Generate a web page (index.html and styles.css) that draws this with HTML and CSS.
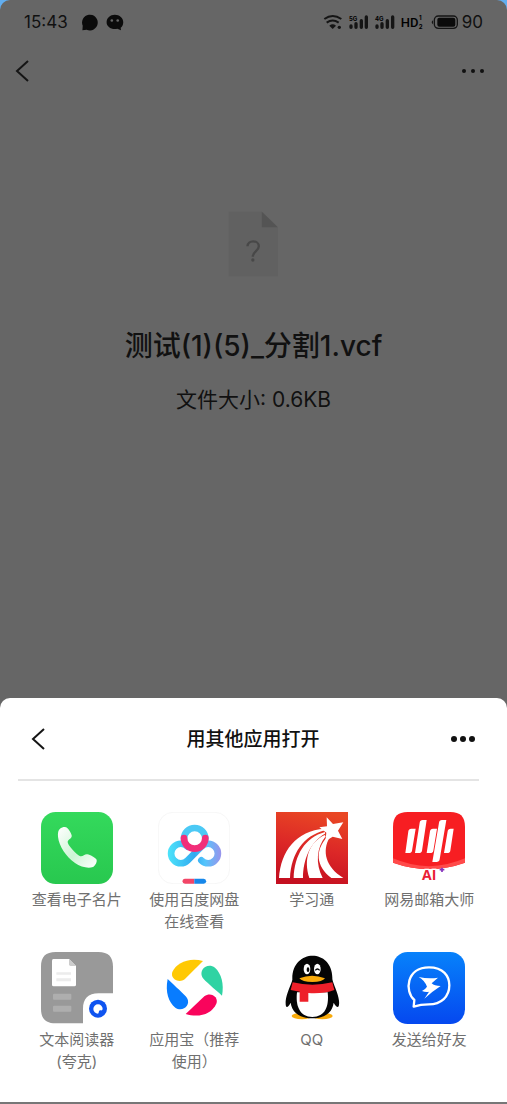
FILE: index.html
```html
<!DOCTYPE html>
<html lang="zh-CN">
<head>
<meta charset="utf-8">
<meta name="viewport" content="width=device-width, initial-scale=1">
<title>用其他应用打开</title>
<link rel="stylesheet" href="styles.css">
</head>
<body>
<div class="screen">
  <header class="status">
    <div class="status-left">
      <time class="clock">15:43</time>
      <svg class="status-chat" viewBox="244 40 132 52" aria-hidden="true">
        <path d="M247 90l1-14a24 24 0 1 1 12 12z" fill="#0b0b0b"/>
        <path d="M346 42c15 0 26 10 26 23 0 8-4 14-8 17l1 8-11-5c-18 4-33-6-33-20 0-13 11-23 25-23z" fill="#0b0b0b"/>
        <circle cx="337" cy="60" r="4" fill="#666"/><circle cx="355" cy="60" r="4" fill="#666"/>
      </svg>
    </div>
    <div class="status-right">
      <svg class="status-signal" viewBox="70 34 408 60" aria-hidden="true">
        <g fill="none" stroke="#151515" stroke-width="6">
          <path d="M74 55q25-18 51 0"/><path d="M81 66q18-13 36 0"/>
        </g>
        <path d="M89 75q10-8 20 0l-10 10z" fill="#151515"/><circle cx="119" cy="80" r="5" fill="#151515"/>
        <g stroke="#151515" stroke-width="10" stroke-linecap="round">
          <path d="M154 76v4M169 69v11M185 60v20M200 49v31M232 76v4M247 69v11M263 60v20M279 49v31"/>
        </g>
        <g class="tiny"><text x="148" y="60">5G</text><text x="226" y="60">4G</text></g>
        <text class="hd" x="303" y="80">HD</text>
        <g class="tiny"><text x="358" y="59">1</text><text x="357" y="84">2</text></g>
        <rect x="404" y="46" width="69" height="37" rx="12" fill="none" stroke="#151515" stroke-width="4"/>
        <rect x="413" y="51" width="54" height="27" rx="6" fill="#0b0b0b"/>
        <path d="M400 59q-8 6 0 12z" fill="#151515"/>
      </svg>
      <span class="level">90</span>
    </div>
  </header>
  <nav class="topbar">
    <button class="icon-btn" aria-label="返回"><svg class="chevron" viewBox="0 0 14 24"><path d="M13 2 2 12l11 10"/></svg></button>
    <button class="icon-btn" aria-label="更多"><svg class="dots" viewBox="0 0 24 6"><circle cx="3" cy="3" r="2"/><circle cx="12" cy="3" r="2"/><circle cx="21" cy="3" r="2"/></svg></button>
  </nav>
  <main class="file">
    <svg class="file-icon" viewBox="356 64 152 198" aria-hidden="true">
      <path d="M358 66h99l48 47v147H358z" fill="#616161"/>
      <path d="M457 66l48 47h-48z" fill="#545454"/>
      <path d="M414 170c0-20 34-20 34 0 0 14-18 15-18 31" fill="none" stroke="#484848" stroke-width="7"/>
      <circle cx="430" cy="211" r="5" fill="#484848"/>
    </svg>
    <h1 class="file-name">测试(1)(5)_分割1.vcf</h1>
    <p class="file-size">文件大小: 0.6KB</p>
  </main>
  <section class="sheet" aria-labelledby="sheet-title">
    <div class="sheet-head">
      <button class="icon-btn" aria-label="返回"><svg class="chevron" viewBox="0 0 14 24"><path d="M13 2 2 12l11 10"/></svg></button>
      <h2 class="sheet-title" id="sheet-title">用其他应用打开</h2>
      <button class="icon-btn" aria-label="更多"><svg class="dots" viewBox="0 0 24 6"><circle cx="3" cy="3" r="3"/><circle cx="12" cy="3" r="3"/><circle cx="21" cy="3" r="3"/></svg></button>
    </div>
    <hr class="divider">
    <div class="apps">
      <button class="app">
        <svg class="app-icon" viewBox="63 36 216 216" aria-hidden="true">
          <defs>
            <linearGradient id="green" x1="0" y1="0" x2="0" y2="1"><stop stop-color="#34d95c"/><stop offset="1" stop-color="#28c84f"/></linearGradient>
            <linearGradient id="phone" x1="0" y1="0" x2="1" y2="1"><stop stop-color="#fff"/><stop offset=".55" stop-color="#cdf5d5"/><stop offset="1" stop-color="#fff"/></linearGradient>
          </defs>
          <rect x="63" y="36" width="216" height="216" rx="44" fill="url(#green)"/>
          <path d="M120 86c6-5 17-6 21-3 6 5 12 15 14 23 2 9-10 12-12 19-2 8 26 38 36 43 9 4 15-7 23-5 9 2 22 9 27 15 4 6-3 20-10 23-15 5-37 0-54-12-26-19-48-50-51-79-1-12 1-20 6-24z" fill="url(#phone)"/>
        </svg>
        <span class="app-name">查看电子名片</span>
      </button>
      <button class="app">
        <svg class="app-icon" viewBox="54 36 216 216" aria-hidden="true">
          <defs>
            <linearGradient id="pan" gradientUnits="userSpaceOnUse" x1="84" y1="0" x2="242" y2="0"><stop stop-color="#4de3fa"/><stop offset=".5" stop-color="#31aaf0"/><stop offset=".7" stop-color="#54c5fc"/><stop offset="1" stop-color="#9795ec"/></linearGradient>
          </defs>
          <rect x="55" y="37" width="214" height="214" rx="44" fill="#fff" stroke="#f2f2f2" stroke-width="2"/>
          <g fill="none" stroke-width="20" stroke-linecap="round">
            <path d="M184 181A29 29 0 1 0 184 140L143 181A29 29 0 1 1 143 140" stroke="url(#pan)"/>
            <path d="M132 116a32 32 0 1 1 64 0" stroke="#4bc9f5"/>
            <path d="M132 114a32 32 0 0 0 64 0" stroke="#f12e79"/>
          </g>
          <path d="M135 236h28v15h-28a7 7 0 0 1 0-15z" fill="#f24567"/>
          <path d="M163 236h28a7 7 0 0 1 0 15h-28z" fill="#1687ea"/>
        </svg>
        <span class="app-name">使用百度网盘在线查看</span>
      </button>
      <button class="app">
        <svg class="app-icon" viewBox="48 36 216 216" aria-hidden="true">
          <defs><linearGradient id="red" x1="0.6" y1="0" x2="0.4" y2="1"><stop stop-color="#e94724"/><stop offset=".5" stop-color="#dc2727"/><stop offset="1" stop-color="#c40f20"/></linearGradient></defs>
          <path d="M48 36h216v216H48z" fill="url(#red)"/>
          <g fill="#fff">
            <path d="M200 52l19 20 31-5-16 25 13 25-29-7-22 14 3-26-21-16 23-3z"/>
            <path d="M57 234C62 154 108 92 194 86v5C130 108 94 160 90 234z"/>
            <path d="M101 234c2-68 34-122 94-138v5c-44 24-66 78-66 133z"/>
            <path d="M148 234c-18-56-2-106 46-129l3 4c-28 34-31 82-9 125z"/>
            <path d="M214 234c-46-34-51-84-10-125l5 3c-24 42-12 90 41 122z"/>
          </g>
        </svg>
        <span class="app-name">学习通</span>
      </button>
      <button class="app">
        <svg class="app-icon" viewBox="54 36 216 216" aria-hidden="true">
          <defs><radialGradient id="glow" cx=".5" cy="0" r=".55"><stop stop-color="#fcc"/><stop offset="1" stop-color="#fff"/></radialGradient></defs>
          <path d="M60 188q102 36 205 0l-20 36H80z" fill="url(#glow)"/>
          <path d="M54 80c0-30 14-44 44-44h128c30 0 44 14 44 44v108q-108 38-216 0z" fill="#f71e22"/>
          <path d="M54 175q50 22 108 24 58-2 108-24v13q-108 38-216 0z" fill="#ff4a4a"/>
          <path d="M100 94q1-8 9-8h13l-11 66q-1 7-10 7h-10zM134 68q1-8 9-8h12l-14 92q-1 7-10 7h-11zM165 94q1-8 9-8h12l-11 66q-1 7-10 7h-10zM192 68q1-8 9-8h13l-20 118q-1 8-10 8h-12zM218 94q1-8 9-8h9l-10 66q-1 7-10 7h-9z" fill="#fff"/>
          <text class="ai" x="141" y="241">AI</text>
          <path d="M201 203v13M194 209h14" stroke="#8532bd" stroke-width="5"/>
        </svg>
        <span class="app-name">网易邮箱大师</span>
      </button>
      <button class="app">
        <svg class="app-icon" viewBox="63 36 216 216" aria-hidden="true">
          <path d="M107 36h128c30 0 44 14 44 44v80h-43c-32 0-47 17-47 47v43h-82c-30 0-44-14-44-44V80c0-30 14-44 44-44z" fill="#999"/>
          <path d="M100 57h47l21 21v56q0 5-5 5h-62q-5 0-5-5V62q0-5 4-5z" fill="#fff"/>
          <path d="M147 57l21 21h-16q-5 0-5-5z" fill="#ccc"/>
          <path d="M109 97h44v7h-44zm0 18h44v9h-44z" fill="#ececec"/>
          <rect x="99" y="161" width="55" height="18" rx="3" fill="#aeaeae"/><rect x="99" y="197" width="55" height="18" rx="3" fill="#aeaeae"/>
          <circle cx="234" cy="206" r="27" fill="#0f54f0"/><path d="M234 221a14 14 0 1 1 14-14q-1 5-5 4-5-1-6 3-1 7-3 7z" fill="#fff"/>
        </svg>
        <span class="app-name">文本阅读器(夸克)</span>
      </button>
      <button class="app">
        <svg class="app-icon" viewBox="54 36 216 216" aria-hidden="true">
          <path d="M189 63c-41-12-80 5-92 33-7 19 19 36 37 22z" fill="#ffc903"/>
          <path d="M246 167c7-35-2-67-21-84-23-16-49 6-38 29 6 10 38 36 59 55z" fill="#2fd3a3"/>
          <path d="M137 222c41 12 78 0 92-31 8-20-17-37-36-22z" fill="#f9045c"/>
          <path d="M83 117c-8 39 3 70 23 86 21 15 48-7 35-29-5-9-38-37-58-57z" fill="#087cff"/>
        </svg>
        <span class="app-name">应用宝（推荐使用）</span>
      </button>
      <button class="app">
        <svg class="app-icon" viewBox="48 36 216 216" aria-hidden="true">
          <ellipse cx="126" cy="228" rx="31" ry="10" fill="#f9ab0b"/><ellipse cx="187" cy="228" rx="31" ry="10" fill="#f9ab0b"/>
          <path d="M97 119c-3-95 123-96 120-2 2 14 18 42 20 65 2 20-4 27-16 6-4 29-26 47-64 47s-61-18-65-47c-11 20-16 16-15-5 2-23 17-50 20-64z" fill="#050505"/>
          <path d="M111 157h92c5 42-8 74-46 74s-51-34-46-74z" fill="#fff"/>
          <path d="M98 127q59 14 119 0l6 23q-33 12-78 9v26h-26v-30l-27-5z" fill="#ee202a"/>
          <ellipse cx="141" cy="87" rx="10" ry="16" fill="#fff"/><ellipse cx="172" cy="87" rx="10" ry="16" fill="#fff"/>
          <ellipse cx="144" cy="89" rx="4" ry="7" fill="#050505"/><path d="M166 91q6-8 13 0" fill="none" stroke="#050505" stroke-width="4"/>
          <path d="M118 115q38-15 77 0-7 11-38 11t-39-11z" fill="#f9ab0b"/>
        </svg>
        <span class="app-name">QQ</span>
      </button>
      <button class="app">
        <svg class="app-icon" viewBox="54 36 216 216" aria-hidden="true">
          <defs><linearGradient id="blue" x1="0" y1="0" x2="0" y2="1"><stop stop-color="#0782fb"/><stop offset="1" stop-color="#0548ef"/></linearGradient></defs>
          <rect x="54" y="36" width="216" height="216" rx="44" fill="url(#blue)"/>
          <path d="M116 200l2-20c-30-26-24-98 44-98 43 0 61 26 61 54 0 34-24 57-62 57-17 0-30 2-45 7z" fill="none" stroke="#fff" stroke-width="7" stroke-linejoin="round"/>
          <path d="M131 111Q160 117 189 113L170 130Q178 138 197 138Q172 154 148 176Q155 166 162 155Q152 157 141 153Q150 149 156 140Q148 120 131 111z" fill="#fff"/>
        </svg>
        <span class="app-name">发送给好友</span>
      </button>
    </div>
  </section>
</div>
</body>
</html>
```
FILE: styles.css
```css
* { box-sizing: border-box; }
body {
  margin: 0;
  background: #62aef0;
  font-family: Inter, "Noto Sans CJK SC", sans-serif;
  color: #111;
}
button {
  margin: 0;
  padding: 0;
  border: 0;
  background: none;
  font: inherit;
  color: inherit;
}
h1, h2, p { margin: 0; }
svg { display: block; }

.screen {
  display: flex;
  flex-direction: column;
  min-height: 100vh;
  background: #666;
  border-radius: 10px 10px 0 0;
  border-bottom: 2px solid #777;
}
.status {
  display: flex;
  justify-content: space-between;
  align-items: center;
  height: 44px;
  padding: 0 24px;
  font-size: 17px;
}
.status-left { display: flex; align-items: center; gap: 13px; }
.status-right { display: flex; align-items: center; gap: 3px; }
.status-chat { width: 44px; height: 17px; }
.status-signal { width: 136px; height: 20px; }
.tiny { font-size: 18px; font-weight: 700; }
.hd {
  font-family: Roboto, sans-serif;
  font-size: 39px;
  font-weight: 500;
}

.topbar {
  display: flex;
  justify-content: space-between;
  align-items: center;
  height: 54px;
  padding: 0 22px 0 15px;
}
.chevron {
  width: 14px;
  height: 24px;
  fill: none;
  stroke: #151515;
  stroke-width: 2;
}
.dots { width: 24px; height: 6px; fill: #111; }

.file {
  flex: 1;
  display: flex;
  flex-direction: column;
  align-items: center;
  padding: 113px 16px 0;
}
.file-icon { width: 51px; height: 66px; }
.file-name {
  margin-top: 49px;
  font-size: 28px;
  line-height: 40px;
  font-weight: 500;
}
.file-size { margin-top: 18px; font-size: 21px; line-height: 32px; }

.sheet {
  background: #fff;
  border-radius: 10px 10px 0 0;
  padding-bottom: 29px;
}
.sheet-head {
  display: grid;
  grid-template-columns: 1fr auto 1fr;
  align-items: center;
  height: 81px;
  padding: 0 32px 0 31px;
}
.sheet-head .icon-btn:first-child { justify-self: start; }
.sheet-head .icon-btn:last-child { justify-self: end; }
.divider {
  height: 2px;
  margin: 0 28px 0 18px;
  border: 0;
  background: #e4e4e4;
}
.sheet-title { padding-top: 2px; font-size: 19px; line-height: 28px; font-weight: 500; }

.apps {
  display: grid;
  grid-template-columns: repeat(4, 1fr);
  row-gap: 19px;
  padding: 31px 19px 0 18px;
}
.app {
  display: flex;
  flex-direction: column;
  align-items: center;
  gap: 5px;
  color: #707070;
  font-size: 15px;
  line-height: 22px;
}
.app-icon { width: 72px; height: 72px; }
.app-name { width: 92px; }
.ai {
  font-family: "Open Sans", sans-serif;
  font-size: 42px;
  font-weight: 700;
  fill: #ea2035;
  stroke: #fff;
  stroke-width: 8px;
  paint-order: stroke;
}
```
